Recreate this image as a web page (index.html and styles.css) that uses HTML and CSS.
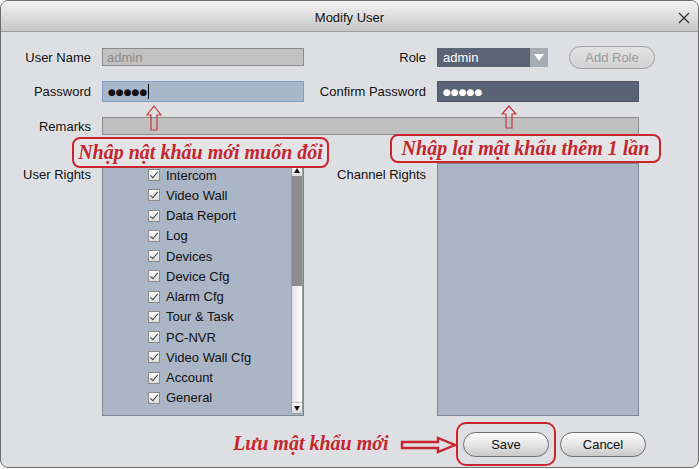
FILE: index.html
```html
<!DOCTYPE html>
<html lang="vi">
<head>
  <meta charset="UTF-8">
  <title>Modify User</title>
  <link rel="stylesheet" href="styles.css">
</head>
<body>

  <div class="dialog">
    <div class="titlebar">
      <span class="title">Modify User</span>
      <svg class="close" width="12" height="12" viewBox="0 0 12 12">
        <path d="M1 1 L11 11 M11 1 L1 11" stroke="#333" stroke-width="1.3" fill="none"/>
      </svg>
    </div>

    <div class="form">
      <label class="lbl">User Name</label>
      <div class="field field-disabled">admin</div>
      <label class="lbl">Role</label>
      <div class="role-wrap">
        <div class="select">
          <span class="select-value">admin</span>
          <span class="select-arrow"></span>
        </div>
        <button class="btn btn-off">Add Role</button>
      </div>

      <label class="lbl">Password</label>
      <div class="field field-focus"><span class="dots">●●●●●</span><span class="caret"></span></div>
      <label class="lbl">Confirm Password</label>
      <div class="field field-dark"><span class="dots">●●●●●</span></div>
      <div></div>

      <label class="lbl">Remarks</label>
      <div class="field field-wide"></div>
      <div></div>

      <label class="lbl lbl-top">User Rights</label>
      <div class="listbox">
        <ul class="rights">
          <li><span class="check"></span>Intercom</li>
          <li><span class="check"></span>Video Wall</li>
          <li><span class="check"></span>Data Report</li>
          <li><span class="check"></span>Log</li>
          <li><span class="check"></span>Devices</li>
          <li><span class="check"></span>Device Cfg</li>
          <li><span class="check"></span>Alarm Cfg</li>
          <li><span class="check"></span>Tour &amp; Task</li>
          <li><span class="check"></span>PC-NVR</li>
          <li><span class="check"></span>Video Wall Cfg</li>
          <li><span class="check"></span>Account</li>
          <li><span class="check"></span>General</li>
        </ul>
        <div class="scrollbar">
          <span class="sb-up"></span>
          <span class="sb-thumb"></span>
          <span class="sb-track"></span>
          <span class="sb-down"></span>
        </div>
      </div>
      <label class="lbl lbl-top">Channel Rights</label>
      <div class="listbox"></div>
      <div></div>
    </div>

    <div class="footer">
      <button class="btn">Save</button>
      <button class="btn">Cancel</button>
    </div>

    <!-- ghi chú màu đỏ -->
    <div class="note note-pass">Nhập nật khẩu mới muốn đổi</div>
    <div class="note note-confirm">Nhập lại mật khẩu thêm 1 lần</div>
    <svg class="arrow-up arrow-pass" width="16" height="26" viewBox="0 0 16 26">
      <path d="M8 1 L15 10 L11 10 L11 25 L5 25 L5 10 L1 10 Z" fill="none" stroke="#c8343c" stroke-width="1.2"/>
    </svg>
    <svg class="arrow-up arrow-confirm" width="16" height="24" viewBox="0 0 16 24">
      <path d="M8 1 L15 9 L11 9 L11 23 L5 23 L5 9 L1 9 Z" fill="none" stroke="#c8343c" stroke-width="1.2"/>
    </svg>
    <div class="save-note">Lưu mật khẩu mới</div>
    <svg class="arrow-right" width="57" height="18" viewBox="0 0 57 18">
      <path d="M2 6 L38 6 L38 2 L55 9 L38 16 L38 12 L2 12 Z" fill="none" stroke="#c8252f" stroke-width="2.4"/>
    </svg>
    <div class="save-ring"></div>
  </div>

</body>
</html>
```

FILE: styles.css
```css
body {
  margin: 0;
  background: #fff;
  font-family: "Liberation Sans", Arial, sans-serif;
  font-size: 13px;
  color: #111;
}

.dialog {
  position: relative;
  box-sizing: border-box;
  width: 699px;
  height: 468px;
  border: 1px solid #6c6c6c;
  border-radius: 8px;
  background: #dedfe3;
  overflow: hidden;
}

.titlebar {
  position: relative;
  height: 30px;
  border-bottom: 1px solid #9c9c9c;
  background: linear-gradient(#f4f4f4, #c6c6c6);
  display: flex;
  align-items: center;
  justify-content: center;
}

.title {
  font-size: 13px;
  color: #111;
  padding-top: 2px;
}

.close {
  position: absolute;
  right: 8px;
  top: 11px;
}

.form {
  display: grid;
  grid-template-columns: 101px 202px 133px 202px 1fr;
  grid-template-rows: 18px 21px 18px 266px;
  row-gap: 15px;
  padding-top: 16px;
  align-items: center;
}

.lbl {
  text-align: right;
  padding-right: 11px;
  white-space: nowrap;
}

.lbl-top {
  align-self: start;
  margin-top: 13px;
  padding-top: 4px;
}

.field {
  box-sizing: border-box;
  height: 100%;
  border: 1px solid #8b8b8b;
  display: flex;
  align-items: center;
  padding-left: 4px;
}

.field-disabled {
  background: #c2c2c2;
  color: #8a8a8a;
}

.field-focus {
  background: #a9b7ca;
  border-color: #7f9dc8;
}

.field-dark {
  background: #5a6275;
  border-color: #4c5466;
  color: #fff;
}

.field-wide {
  grid-column: 2 / 5;
  background: #c0c0c0;
}

.dots {
  font-family: "DejaVu Sans", sans-serif;
  font-size: 9px;
  padding-left: 1px;
}

.caret {
  width: 1px;
  height: 15px;
  background: #000;
  margin-left: 1px;
}

.role-wrap {
  grid-column: 4 / 6;
  display: flex;
  align-items: center;
  gap: 21px;
  height: 100%;
}

.select {
  width: 111px;
  height: 19px;
  display: flex;
  background: #5b6377;
}

.select-value {
  flex: 1;
  color: #fff;
  padding-left: 6px;
  line-height: 19px;
}

.select-arrow {
  width: 18px;
  background: #a7abb4;
  position: relative;
}

.select-arrow::after {
  content: "";
  position: absolute;
  left: 4px;
  top: 6px;
  border-left: 5px solid transparent;
  border-right: 5px solid transparent;
  border-top: 7px solid #fff;
}

.btn {
  width: 86px;
  height: 25px;
  border: 1px solid #6f6f6f;
  border-radius: 13px;
  background: linear-gradient(#fbfbfb, #e6e6e6 50%, #c9c9c9);
  font-family: "Liberation Sans", Arial, sans-serif;
  font-size: 13px;
  color: #111;
  padding: 0;
}

.btn-off {
  height: 23px;
  border-color: #a3a3a3;
  background: linear-gradient(#e2e2e2, #d2d2d2);
  color: #9a9a9a;
}

.listbox {
  box-sizing: border-box;
  height: 253px;
  align-self: start;
  margin-top: 13px;
  border: 1px solid #7e8694;
  background: #aab5c6;
  display: flex;
}

.rights {
  flex: 1;
  list-style: none;
  margin: 0;
  padding: 1px 0 0 45px;
}

.rights li {
  height: 20.25px;
  display: flex;
  align-items: center;
  gap: 6px;
}

.check {
  position: relative;
  box-sizing: border-box;
  width: 12px;
  height: 12px;
  border: 1px solid #8a8a8a;
  background: linear-gradient(#fcfcfc, #dcdcdc);
}

.check::after {
  content: "";
  position: absolute;
  left: 3px;
  top: 0px;
  width: 3px;
  height: 7px;
  border-right: 1.5px solid #3a4050;
  border-bottom: 1.5px solid #3a4050;
  transform: rotate(40deg);
}

.scrollbar {
  box-sizing: border-box;
  width: 12px;
  margin: 1px 0;
  border: 1px solid #9a9a9a;
  border-radius: 3px;
  display: flex;
  flex-direction: column;
  background: #f0f0f0;
}

.sb-up, .sb-down {
  position: relative;
  height: 10px;
  background: linear-gradient(#fafafa, #dcdcdc);
}

.sb-up::after, .sb-down::after {
  content: "";
  position: absolute;
  left: 2px;
  border-left: 3px solid transparent;
  border-right: 3px solid transparent;
}

.sb-up::after {
  top: 2px;
  border-bottom: 5px solid #111;
}

.sb-down::after {
  top: 3px;
  border-top: 5px solid #111;
}

.sb-down {
  border-radius: 0 0 3px 3px;
  border-top: 1px solid #bbb;
}

.sb-thumb {
  height: 110px;
  background: #8c8c8c;
}

.sb-track {
  flex: 1;
  background: linear-gradient(90deg, #e4e4e4, #fbfbfb);
}

.footer {
  display: flex;
  justify-content: flex-end;
  gap: 11px;
  padding: 16px 52px 0 0;
}

.note, .save-note {
  position: absolute;
  font-family: "Liberation Serif", "Times New Roman", serif;
  font-weight: bold;
  font-style: italic;
  font-size: 20px;
  color: #c3262f;
  white-space: nowrap;
}

.note {
  box-sizing: border-box;
  border: 2px solid #c8252f;
  border-radius: 8px;
  display: flex;
  align-items: center;
  justify-content: center;
  background: #e4e4e6;
}

.note-pass {
  left: 71px;
  top: 136px;
  width: 257px;
  height: 31px;
}

.note-confirm {
  left: 389px;
  top: 133px;
  width: 271px;
  height: 29px;
}

.arrow-up {
  position: absolute;
}

.arrow-pass {
  left: 145px;
  top: 104px;
}

.arrow-confirm {
  left: 500px;
  top: 104px;
}

.save-note {
  left: 232px;
  top: 431px;
}

.arrow-right {
  position: absolute;
  left: 399px;
  top: 435px;
}

.save-ring {
  position: absolute;
  left: 455px;
  top: 421px;
  width: 96px;
  height: 40px;
  border: 2px solid #c8252f;
  border-radius: 10px;
}
```
